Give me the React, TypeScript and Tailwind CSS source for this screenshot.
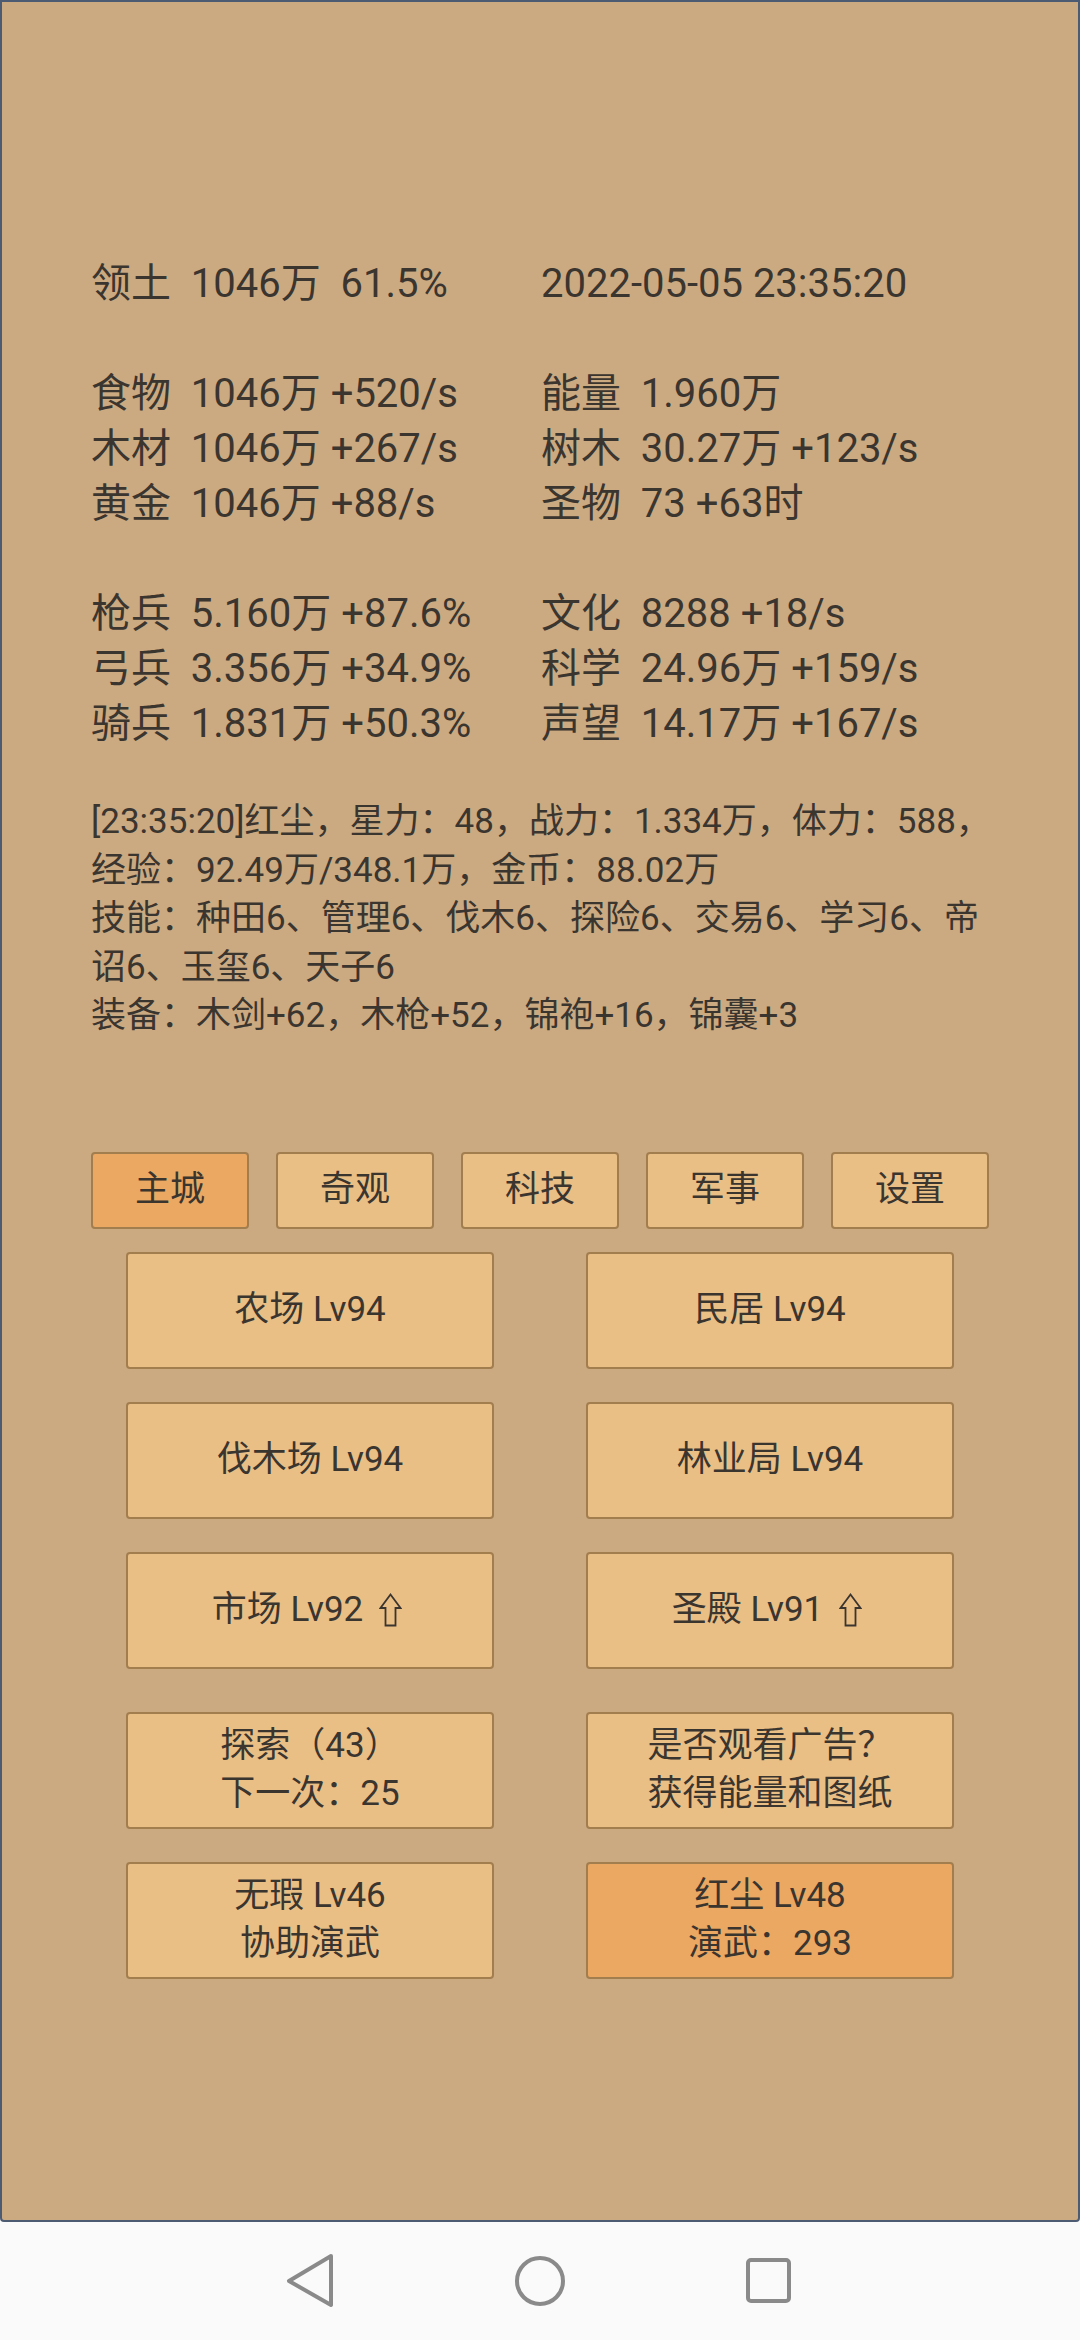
import React from 'react';

const font = { fontFamily: 'Roboto, "Noto Sans CJK SC", sans-serif' };

const stats: [string, string][][] = [
  [['领土  1046万  61.5%', '2022-05-05 23:35:20']],
  [],
  [
    ['食物  1046万 +520/s', '能量  1.960万'],
    ['木材  1046万 +267/s', '树木  30.27万 +123/s'],
    ['黄金  1046万 +88/s', '圣物  73 +63时'],
  ],
  [],
  [
    ['枪兵  5.160万 +87.6%', '文化  8288 +18/s'],
    ['弓兵  3.356万 +34.9%', '科学  24.96万 +159/s'],
    ['骑兵  1.831万 +50.3%', '声望  14.17万 +167/s'],
  ],
];

const logLines = [
  '[23:35:20]红尘，星力：48，战力：1.334万，体力：588，',
  '经验：92.49万/348.1万，金币：88.02万',
  '技能：种田6、管理6、伐木6、探险6、交易6、学习6、帝',
  '诏6、玉玺6、天子6',
  '装备：木剑+62，木枪+52，锦袍+16，锦囊+3',
];

const tabs = ['主城', '奇观', '科技', '军事', '设置'];

function UpArrow() {
  return (
    <span className="inline-flex w-[36px] justify-center items-center ml-[9px]">
      <svg width="23" height="34" viewBox="0 0 23 34" fill="none">
        <path d="M11.5 1.5 L21.5 15 L16.5 15 L16.5 32.5 L6.5 32.5 L6.5 15 L1.5 15 Z" stroke="#3b352f" strokeWidth="1.8" strokeLinejoin="miter" />
      </svg>
    </span>
  );
}

interface BtnProps {
  lines: string[];
  active?: boolean;
  arrow?: boolean;
}

function BigButton({ lines, active = false, arrow = false }: BtnProps) {
  return (
    <div
      className={`w-[368px] h-[117px] rounded-[4px] border-2 border-[#a27d4e] flex flex-col items-center justify-center text-[35px] leading-[48.5px] text-[#3b352f] ${
        active ? 'bg-[#eba862]' : 'bg-[#eabf86]'
      }`}
    >
      {lines.map((l, i) => (
        <div key={i} className="flex items-center whitespace-pre">
          {l}
          {arrow && i === 0 && <UpArrow />}
        </div>
      ))}
    </div>
  );
}

export default function App() {
  return (
    <div className="w-[1080px] h-[2340px] flex flex-col bg-[#fafafa]" style={font}>
      <div className="h-[2222px] border-2 border-[#4c5a72] rounded-b-[4px] bg-[#cbaa82] pt-[254px] text-[#3b352f]">
        {/* resource stats */}
        <div className="pl-[89px] text-[40px] leading-[55px]">
          {stats.map((group, gi) =>
            group.length === 0 ? (
              <div key={gi} className="h-[55px]" />
            ) : (
              group.map((row, ri) => (
                <div key={`${gi}-${ri}`} className="grid grid-cols-[450px_1fr] whitespace-pre">
                  <span>{row[0]}</span>
                  <span>{row[1]}</span>
                </div>
              ))
            )
          )}
        </div>

        {/* hero log */}
        <div className="pl-[89px] mt-[47px] text-[35px] leading-[48.5px] whitespace-nowrap">
          {logLines.map((l, i) => (
            <div key={i}>{l}</div>
          ))}
        </div>

        {/* tabs */}
        <div className="flex gap-[27px] pl-[89px] mt-[111px]">
          {tabs.map((t, i) => (
            <div
              key={t}
              className={`w-[158px] h-[77px] rounded-[4px] border-2 border-[#a27d4e] flex items-center justify-center text-[35px] ${
                i === 0 ? 'bg-[#eba862]' : 'bg-[#eabf86]'
              }`}
            >
              {t}
            </div>
          ))}
        </div>

        {/* buildings */}
        <div className="flex flex-col gap-[33px] pl-[124px] mt-[23px]">
          <div className="flex gap-[92px]">
            <BigButton lines={['农场 Lv94']} />
            <BigButton lines={['民居 Lv94']} />
          </div>
          <div className="flex gap-[92px]">
            <BigButton lines={['伐木场 Lv94']} />
            <BigButton lines={['林业局 Lv94']} />
          </div>
          <div className="flex gap-[92px]">
            <BigButton lines={['市场 Lv92']} arrow />
            <BigButton lines={['圣殿 Lv91']} arrow />
          </div>
          <div className="flex gap-[92px] mt-[10px]">
            <BigButton lines={['探索（43）', '下一次：25']} />
            <BigButton lines={['是否观看广告？', '获得能量和图纸']} />
          </div>
          <div className="flex gap-[92px]">
            <BigButton lines={['无瑕 Lv46', '协助演武']} />
            <BigButton lines={['红尘 Lv48', '演武：293']} active />
          </div>
        </div>
      </div>

      {/* system nav bar */}
      <div className="flex-1 flex items-center justify-center gap-[170px]">
        <svg width="60" height="60" viewBox="0 0 60 60" fill="none">
          <path d="M51 5 L9 30 L51 54 Z" stroke="#8a8a8a" strokeWidth="4" strokeLinejoin="round" />
        </svg>
        <svg width="60" height="60" viewBox="0 0 60 60" fill="none">
          <circle cx="30" cy="30" r="23" stroke="#8a8a8a" strokeWidth="4" />
        </svg>
        <svg width="60" height="60" viewBox="0 0 60 60" fill="none">
          <rect x="8" y="9" width="41" height="41" rx="3" stroke="#8a8a8a" strokeWidth="4" />
        </svg>
      </div>
    </div>
  );
}
